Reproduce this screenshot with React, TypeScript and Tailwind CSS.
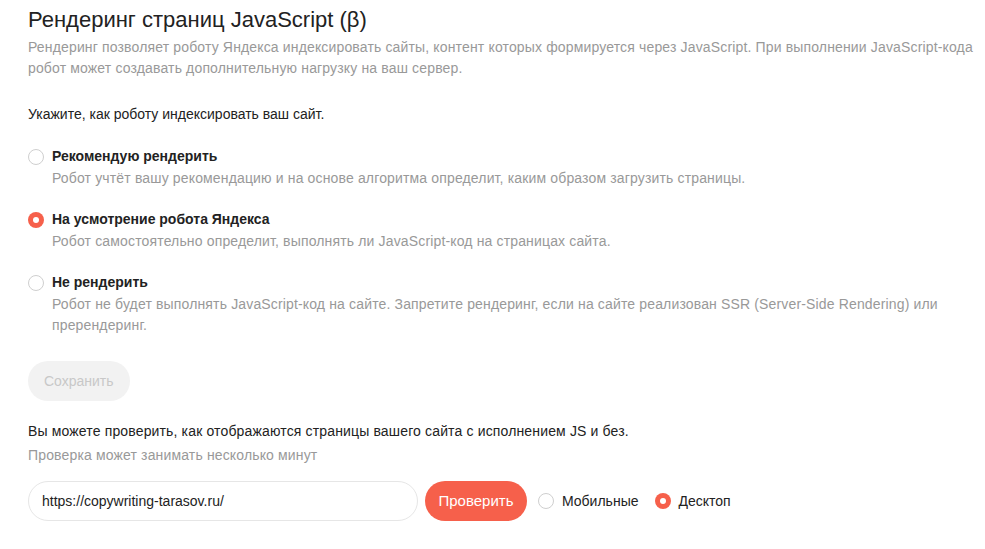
import { useState } from "react";

const options = [
  {
    id: "recommend",
    title: "Рекомендую рендерить",
    desc: "Робот учтёт вашу рекомендацию и на основе алгоритма определит, каким образом загрузить страницы.",
  },
  {
    id: "robot",
    title: "На усмотрение робота Яндекса",
    desc: "Робот самостоятельно определит, выполнять ли JavaScript-код на страницах сайта.",
  },
  {
    id: "none",
    title: "Не рендерить",
    desc: "Робот не будет выполнять JavaScript-код на сайте. Запретите рендеринг, если на сайте реализован SSR (Server-Side Rendering) или пререндеринг.",
  },
];

function Radio({ checked }: { checked: boolean }) {
  return checked ? (
    <span className="w-4 h-4 rounded-full bg-[#f6604b] flex items-center justify-center shrink-0">
      <span className="w-1.5 h-1.5 rounded-full bg-white" />
    </span>
  ) : (
    <span className="w-4 h-4 rounded-full border border-[#cfcfcf] bg-white shrink-0" />
  );
}

export default function App() {
  const [mode, setMode] = useState("robot");
  const [device, setDevice] = useState("desktop");
  const [url, setUrl] = useState("https://copywriting-tarasov.ru/");

  return (
    <div className="w-[985px] h-[549px] bg-white overflow-hidden text-[#222] font-['Liberation_Sans',Arial,sans-serif] text-[14px] pl-[28px] pt-[6px]">
      <h1 className="text-[22px] leading-[28px] text-[#222]">Рендеринг страниц JavaScript (β)</h1>
      <p className="text-[#999] leading-[21px] mt-[3px] w-[945px] tracking-[0.15px]">
        Рендеринг позволяет роботу Яндекса индексировать сайты, контент которых формируется через JavaScript. При выполнении JavaScript-кода робот может создавать дополнительную нагрузку на ваш сервер.
      </p>
      <p className="mt-[25px] leading-[21px]">Укажите, как роботу индексировать ваш сайт.</p>

      <div className="mt-[21px] flex flex-col gap-[20px]">
        {options.map(o => (
          <div key={o.id} className="cursor-pointer" onClick={() => setMode(o.id)}>
            <div className="flex items-center gap-2 h-[21px]">
              <Radio checked={mode === o.id} />
              <span className="font-bold">{o.title}</span>
            </div>
            <p className="pl-[24px] text-[#999] leading-[21px] mt-[1px] w-[945px] tracking-[0.15px]">{o.desc}</p>
          </div>
        ))}
      </div>

      <button className="mt-[25px] h-[40px] px-[16px] rounded-full bg-[#f2f2f2] text-[#c8c8c8] text-[14px]">Сохранить</button>

      <p className="mt-[20px] leading-[21px] tracking-[0.15px]">Вы можете проверить, как отображаются страницы вашего сайта с исполнением JS и без.</p>
      <p className="mt-[3px] text-[#999] leading-[21px] tracking-[0.15px]">Проверка может занимать несколько минут</p>

      <div className="mt-[15px] flex items-center">
        <input
          value={url}
          onChange={e => setUrl(e.target.value)}
          className="w-[390px] h-[40px] rounded-full border border-[#e6e6e6] px-[13px] text-[14px] text-[#222] outline-none"
        />
        <button className="ml-[7px] h-[40px] w-[102px] rounded-full bg-[#f6604b] text-white text-[15px]">Проверить</button>
        <label className="ml-[11px] flex items-center gap-2 cursor-pointer" onClick={() => setDevice("mobile")}>
          <Radio checked={device === "mobile"} />
          <span className="text-[14px]">Мобильные</span>
        </label>
        <label className="ml-[16px] flex items-center gap-2 cursor-pointer" onClick={() => setDevice("desktop")}>
          <Radio checked={device === "desktop"} />
          <span className="text-[14px]">Десктоп</span>
        </label>
      </div>
    </div>
  );
}
